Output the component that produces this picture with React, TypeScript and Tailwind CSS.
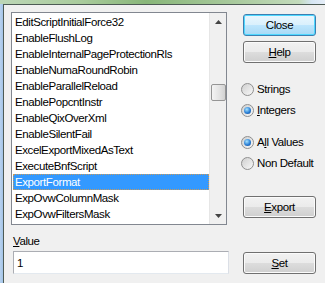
import React from 'react';

const items = [
  'EditScriptInitialForce32',
  'EnableFlushLog',
  'EnableInternalPageProtectionRls',
  'EnableNumaRoundRobin',
  'EnableParallelReload',
  'EnablePopcntInstr',
  'EnableQixOverXml',
  'EnableSilentFail',
  'ExcelExportMixedAsText',
  'ExecuteBnfScript',
  'ExportFormat',
  'ExpOvwColumnMask',
  'ExpOvwFiltersMask',
];

const SELECTED = 'ExportFormat';

function Button({ children, primary = false, className = '' }: { children: React.ReactNode; primary?: boolean; className?: string }) {
  return (
    <div
      className={`flex items-center justify-center rounded-[3px] border w-[73px] h-[22px] ${
        primary
          ? 'border-[#3c7fb1] bg-[linear-gradient(#eaf7fe_0%,#d9f0fc_50%,#bee6fd_50%,#a7d9f5_100%)] shadow-[inset_0_0_0_1px_#4fd8ff]'
          : 'border-[#707070] bg-[linear-gradient(#f2f2f2_0%,#ebebeb_50%,#dddddd_50%,#cfcfcf_100%)] shadow-[inset_0_0_0_1px_#fbfbfb]'
      } ${className}`}
    >
      {children}
    </div>
  );
}

function Radio({ checked, children, className = '' }: { checked?: boolean; children: React.ReactNode; className?: string }) {
  return (
    <div className={`flex items-center h-[16px] ${className}`}>
      <span className="w-[13px] h-[13px] rounded-full border border-[#8f8f8f] bg-[linear-gradient(135deg,#cfcfcf,#f8f8f8)] flex items-center justify-center shrink-0">
        {checked && (
          <span className="w-[7px] h-[7px] rounded-full bg-[radial-gradient(circle_at_40%_35%,#a8e4ff_0%,#2a7fd6_55%,#0d3f8a_100%)]" />
        )}
      </span>
      <span className="ml-[3px]">{children}</span>
    </div>
  );
}

export default function App() {
  return (
    <div
      className="w-[325px] h-[283px] overflow-hidden flex flex-col bg-[#f0f0f0] text-black text-[11.5px] tracking-[-0.4px] leading-[14px]"
      style={{ fontFamily: '"Liberation Sans", Arial, sans-serif' }}
    >
      {/* window frame top */}
      <div className="h-[4px] shrink-0 bg-[linear-gradient(90deg,#bcd6b6_0%,#a9cb9c_25%,#88b679_45%,#a6c89a_70%,#c3dbbb_92%,#d6e6f4_96%,#e6eef8_100%)]" />
      <div className="flex flex-1 min-h-0">
        {/* window frame left */}
        <div className="w-[3px] shrink-0 bg-[linear-gradient(90deg,#b7d2ef,#a4c4e8)]" />
        <div className="flex-1 min-w-0 border-t border-l border-[#4d5b55] pl-[7px] pt-[7px]">
          <div className="flex items-start">
            {/* list box */}
            <div className="w-[216px] h-[213px] border border-[#828790] bg-white flex shrink-0">
              <div className="flex-1 pt-[1px] pl-[1px]">
                {items.map((it) => (
                  <div
                    key={it}
                    className={`h-[16px] leading-[16px] pl-[2px] whitespace-nowrap ${
                      it === SELECTED ? 'bg-[#3399ff] text-white outline outline-1 outline-dotted outline-[#c79a5c] -outline-offset-1' : ''
                    }`}
                  >
                    {it}
                  </div>
                ))}
              </div>
              {/* scrollbar */}
              <div className="w-[17px] shrink-0 bg-[#f0f0f0] border-l border-[#e6e6e6] flex flex-col items-center">
                <div className="h-[17px] w-full flex items-center justify-center">
                  <svg width="7" height="4" viewBox="0 0 7 4">
                    <path d="M3.5 0 L7 4 L0 4 Z" fill="#444" />
                  </svg>
                </div>
                <div className="mt-[54px] w-[15px] h-[17px] rounded-[2px] border border-[#959595] bg-[linear-gradient(90deg,#f4f4f4,#e2e2e2_60%,#d2d2d2)]" />
                <div className="flex-1" />
                <div className="h-[17px] w-full flex items-center justify-center">
                  <svg width="7" height="4" viewBox="0 0 7 4">
                    <path d="M0 0 L7 0 L3.5 4 Z" fill="#444" />
                  </svg>
                </div>
              </div>
            </div>

            {/* right column */}
            <div className="ml-[14px] mt-[2px] w-[76px] flex flex-col">
              <Button primary className="ml-[2px]">Close</Button>
              <Button className="ml-[2px] mt-[5px]">
                <span><u>H</u>elp</span>
              </Button>
              <Radio className="mt-[18px]">Strings</Radio>
              <Radio checked className="mt-[5px]"><u>I</u>ntegers</Radio>
              <Radio checked className="mt-[16px]">A<u>l</u>l Values</Radio>
              <Radio className="mt-[5px]">Non Default</Radio>
              <Button className="ml-[2px] mt-[25px]">
                <span><u>E</u>xport</span>
              </Button>
            </div>
          </div>

          <div className="mt-[9px] ml-[2px] h-[14px]">
            <u>V</u>alue
          </div>
          <div className="flex items-center mt-[3px]">
            <div className="ml-[2px] w-[216px] h-[23px] border border-[#abadb3] border-b-[#e3e9ef] border-r-[#dbdfe6] bg-white pl-[3px] flex items-center">
              1
            </div>
            <Button className="ml-[14px]">
              <span><u>S</u>et</span>
            </Button>
          </div>
          <div className="mt-[9px] ml-[5px] w-[158px] h-[2px] border-t border-[#707070] bg-[#f2f2f2]" />
        </div>
      </div>
    </div>
  );
}
